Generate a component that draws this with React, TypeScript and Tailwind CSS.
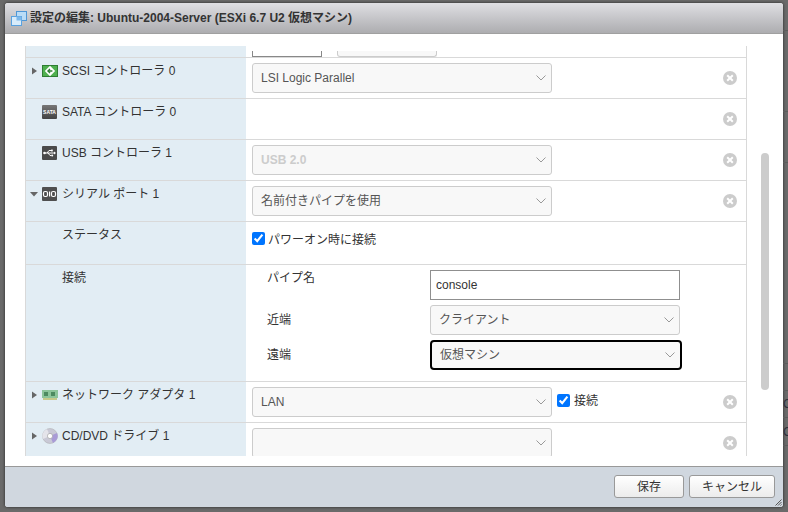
// App.tsx
import React from 'react';

const Caret: React.FC<{ open?: boolean }> = ({ open }) => (
  <svg width="12" height="16" viewBox="0 0 12 16" className="shrink-0">
    {open ? <path d="M0 6 H8 L4 10.5 Z" fill="#666" /> : <path d="M2 4.5 L7 8 L2 11.5 Z" fill="#666" />}
  </svg>
);

const Chevron = () => (
  <svg width="10" height="6" viewBox="0 0 10 6" className="shrink-0">
    <path d="M0.5 0.5 L5 5 L9.5 0.5" fill="none" stroke="#999" strokeWidth="1" />
  </svg>
);

const CloseIcon = () => (
  <svg width="14" height="14" viewBox="0 0 14 14" className="shrink-0">
    <circle cx="7" cy="7" r="7" fill="#ccc" />
    <path d="M4.2 4.2 L9.8 9.8 M9.8 4.2 L4.2 9.8" stroke="#fff" strokeWidth="2" />
  </svg>
);

const WindowIcon = () => (
  <svg width="16" height="15" viewBox="0 0 16 15" className="shrink-0">
    <rect x="5.5" y="0.5" width="10" height="9" fill="#b9dcf7" stroke="#4f97d6" />
    <rect x="0.5" y="5.5" width="10" height="9" fill="#d8ecfb" stroke="#5aa2e0" />
    <rect x="5.5" y="5.5" width="5" height="4" fill="#7db8ea" />
  </svg>
);

const ScsiIcon = () => (
  <svg width="16" height="12" viewBox="0 0 16 12" className="shrink-0">
    <rect x="0.5" y="0.5" width="15" height="11" fill="#4fb04f" stroke="#2e7d32" />
    <path d="M8 0.8 L13.2 6 L8 11.2 L2.8 6 Z" fill="#fff" />
    <path d="M10.4 6 H6 M8 3.9 L5.9 6 L8 8.1" fill="none" stroke="#2e7d32" strokeWidth="1.3" />
  </svg>
);

const SataIcon = () => (
  <div className="w-[15px] h-[14px] shrink-0 rounded-[1px] bg-gradient-to-b from-[#777] to-[#444] flex items-center justify-center text-[5px] leading-none font-bold text-white">
    SATA
  </div>
);

const UsbIcon = () => (
  <svg width="15" height="14" viewBox="0 0 15 14" className="shrink-0">
    <rect width="15" height="14" rx="1" fill="#4a4a4a" />
    <path d="M2 7 H13 M5 7 L7 4.5 H9 M6 7 L8 9.5 H9.5" fill="none" stroke="#fff" strokeWidth="1" />
    <circle cx="2.5" cy="7" r="1.3" fill="#fff" />
    <rect x="9" y="3.6" width="1.8" height="1.8" fill="#fff" />
    <circle cx="10.2" cy="9.5" r="1" fill="#fff" />
    <path d="M12 5.5 L14 7 L12 8.5 Z" fill="#fff" />
  </svg>
);

const SerialIcon = () => (
  <svg width="15" height="14" viewBox="0 0 15 14" className="shrink-0">
    <rect width="15" height="14" rx="1" fill="#4f4f4f" />
    <rect x="1.5" y="4.5" width="4" height="5" rx="1.5" fill="none" stroke="#fff" strokeWidth="1.2" />
    <rect x="7" y="4.5" width="1.2" height="5" fill="#fff" />
    <rect x="9.5" y="4.5" width="4" height="5" rx="1.5" fill="none" stroke="#fff" strokeWidth="1.2" />
  </svg>
);

const NetworkIcon = () => (
  <svg width="16" height="12" viewBox="0 0 16 12" className="shrink-0">
    <rect y="1" width="16" height="8" fill="#8cc49a" />
    <rect x="2" y="3" width="4" height="4" fill="#4d8a60" />
    <rect x="9" y="3" width="4" height="4" fill="#4d8a60" />
    <rect x="1" y="9" width="14" height="2" fill="#c5c98a" />
  </svg>
);

const CdIcon = () => (
  <svg width="16" height="16" viewBox="0 0 16 16" className="shrink-0">
    <circle cx="8" cy="8" r="7.5" fill="#c9c9d6" stroke="#aaa" strokeWidth="0.5" />
    <path d="M8 8 L15 5 A7.5 7.5 0 0 1 11 15 Z" fill="#a99bd6" />
    <path d="M8 8 L1 11 A7.5 7.5 0 0 1 5 1 Z" fill="#e4e4ea" />
    <circle cx="8" cy="8" r="2.6" fill="#fff" stroke="#999" strokeWidth="0.6" />
  </svg>
);

const Select: React.FC<{ value?: string; disabled?: boolean; focused?: boolean; className?: string }> = ({
  value,
  disabled,
  focused,
  className = 'w-[300px]',
}) => (
  <div
    className={`h-[30px] flex items-center justify-between bg-[#f8f8f8] pl-[8px] ${
      focused ? 'border-2 border-black rounded-[4px] pr-[5px]' : 'border border-[#ccc] rounded-[3px] pr-[5px]'
    } ${disabled ? 'text-[#ccc] font-bold' : 'text-[#555]'} ${className}`}
  >
    <span>{value}</span>
    <Chevron />
  </div>
);

interface RowProps {
  label: string;
  caret?: 'open' | 'closed';
  icon?: React.ReactNode;
  border?: boolean;
  height: string;
  children?: React.ReactNode;
}

const Row: React.FC<RowProps> = ({ label, caret, icon, height, border = true, children }) => (
  <div className={`flex shrink-0 border-[#d9d9d9] ${height} ${border ? 'border-b' : ''}`}>
    <div className="w-[220px] shrink-0 bg-[#e2edf4] pt-[5px] pl-[4px] flex items-start">
      <div className="flex items-center h-[16px]">
        <span className="w-[12px] shrink-0">
          {caret && <Caret open={caret === 'open'} />}
        </span>
        <span className="w-[16px] shrink-0 flex items-center">{icon}</span>
        <span className="ml-[4px] text-[#333] whitespace-nowrap">{label}</span>
      </div>
    </div>
    <div className="flex-1 pt-[5px] pl-[6px] pr-[9px] flex items-start">
      <div className="flex-1">{children}</div>
      <div className="mt-[8px]">
        <CloseIcon />
      </div>
    </div>
  </div>
);

const PlainRow: React.FC<{ label: string; height: string; children: React.ReactNode }> = ({ label, height, children }) => (
  <div className={`flex shrink-0 border-b border-[#d9d9d9] ${height}`}>
    <div className="w-[220px] shrink-0 bg-[#e2edf4] pt-[5px] pl-[36px] leading-[16px] text-[#333]">{label}</div>
    <div className="flex-1">{children}</div>
  </div>
);

const Button: React.FC<{ label: string; className: string }> = ({ label, className }) => (
  <button className={`h-[23px] border border-[#999] rounded-[3px] bg-gradient-to-b from-white to-[#ececec] text-[#333] text-[12px] ${className}`}>
    {label}
  </button>
);

const App: React.FC = () => {
  return (
    <div className="w-[788px] h-[512px] overflow-hidden bg-[#6a6a6a] flex text-[12px] leading-[16px] font-['Liberation_Sans','Noto_Sans_CJK_JP',sans-serif]">
      {/* Dialog */}
      <div className="ml-[5px] mt-[3px] w-[778px] h-[504px] shrink-0 flex flex-col rounded-[3px] overflow-hidden bg-white shadow-[0_0_3px_#222]">
        {/* Title bar */}
        <div className="h-[31px] shrink-0 flex items-center pl-[6px] gap-[3px] bg-gradient-to-b from-[#dfdfe3] to-[#adadb0] border-b border-[#a0a0a0]">
          <WindowIcon />
          <span className="font-bold text-[#333]">設定の編集: Ubuntu-2004-Server (ESXi 6.7 U2 仮想マシン)</span>
        </div>

        {/* Body */}
        <div className="flex-1 flex min-h-0 bg-white pl-[20px]">
          <div className="w-[722px] shrink-0 mt-[12px] mb-[10px] overflow-hidden border-x border-[#d9d9d9] flex flex-col">
            {/* clipped row above */}
            <div className="flex h-[12px] shrink-0 border-b border-[#d9d9d9]">
              <div className="w-[220px] shrink-0 bg-[#e2edf4]" />
              <div className="flex-1 pl-[6px] flex gap-[15px] items-end">
                <div className="w-[70px] h-[6px] border-x border-b border-[#888]" />
                <div className="w-[100px] h-[6px] border-x border-b border-[#ccc] rounded-b-[3px] bg-[#f8f8f8]" />
              </div>
            </div>

            <Row label="SCSI コントローラ 0" caret="closed" icon={<ScsiIcon />} height="h-[41px]">
              <Select value="LSI Logic Parallel" />
            </Row>
            <Row label="SATA コントローラ 0" icon={<SataIcon />} height="h-[41px]" />
            <Row label="USB コントローラ 1" icon={<UsbIcon />} height="h-[41px]">
              <Select value="USB 2.0" disabled />
            </Row>
            <Row label="シリアル ポート 1" caret="open" icon={<SerialIcon />} height="h-[41px]">
              <Select value="名前付きパイプを使用" />
            </Row>

            <PlainRow label="ステータス" height="h-[43px]">
              <div className="pl-[6px] pt-[7px] flex items-center gap-[3px] h-[22px] box-content">
                <input type="checkbox" defaultChecked className="w-[13px] h-[13px] m-0 mb-[3px]" />
                <span className="text-[#333]">パワーオン時に接続</span>
              </div>
            </PlainRow>

            <PlainRow label="接続" height="h-[117px]">
              <div className="pl-[21px] pt-[5px] grid grid-cols-[163px_auto] justify-start gap-y-[5px] text-[#333]">
                <div className="h-[30px]">パイプ名</div>
                <input
                  readOnly
                  value="console"
                  className="w-[250px] h-[30px] border border-[#8f8f8f] bg-white px-[5px] text-[#333] outline-none"
                />
                <div className="flex items-center">近端</div>
                <Select value="クライアント" className="w-[250px]" />
                <div className="flex items-center">遠端</div>
                <Select value="仮想マシン" focused className="w-[252px]" />
              </div>
            </PlainRow>

            <Row label="ネットワーク アダプタ 1" caret="closed" icon={<NetworkIcon />} height="h-[41px]">
              <div className="flex items-center gap-[5px]">
                <Select value="LAN" />
                <input type="checkbox" defaultChecked className="w-[13px] h-[13px] m-0 mb-[4px]" />
                <span className="-ml-[1px] mb-[3px] text-[#333]">接続</span>
              </div>
            </Row>
            <Row label="CD/DVD ドライブ 1" caret="closed" icon={<CdIcon />} height="flex-1" border={false}>
              <Select />
            </Row>
          </div>

          {/* Scrollbar */}
          <div className="ml-[14px] mt-[119px] w-[8px] h-[237px] rounded-[4px] bg-[#ccc]" />
        </div>

        {/* Footer */}
        <div className="relative h-[41px] shrink-0 flex justify-end items-start gap-[5px] pt-[8px] pr-[8px] bg-[#d0d7df] border-t border-[#999]">
          <Button label="保存" className="w-[70px]" />
          <Button label="キャンセル" className="w-[86px]" />
          <svg width="7" height="7" viewBox="0 0 7 7" className="absolute right-[1px] bottom-[1px]">
            <path d="M0.5 6.5 L6.5 0.5 M3 6.5 L6.5 3 M5.5 6.5 L6.5 5.5" stroke="#555" strokeWidth="1" />
          </svg>
        </div>
      </div>

      {/* Page behind the dialog */}
      <div className="flex-1 min-w-0 overflow-hidden flex flex-col text-[#2f2f3a] leading-[16px]">
        <div className="h-[31px] shrink-0 border-b border-[#5c5c5c]" />
        <div className="h-[81px] shrink-0 border-b border-[#5c5c5c]" />
        <div className="h-[51px] shrink-0 border-b border-[#5c5c5c]" />
        <div className="h-[201px] shrink-0 border-b border-[#5c5c5c]" />
        <div className="h-[27px] shrink-0 border-b border-[#5c5c5c]" />
        <div className="h-[27px] shrink-0 border-b border-[#5c5c5c] flex items-center">C</div>
        <div className="h-[28px] shrink-0 border-b border-[#5c5c5c] flex items-center">C</div>
      </div>
    </div>
  );
};

export default App;
